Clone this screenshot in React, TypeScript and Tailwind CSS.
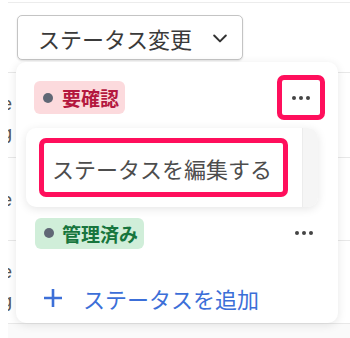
import React from "react";

const Dots = () => (
  <div className="flex items-center gap-[3px]">
    <span className="w-[4px] h-[4px] rounded-full bg-[#444]" />
    <span className="w-[4px] h-[4px] rounded-full bg-[#444]" />
    <span className="w-[4px] h-[4px] rounded-full bg-[#444]" />
  </div>
);

const BgRow = ({ lines, h }: { lines: string[]; h: string }) => (
  <div className={`border-t border-[#e8e8e8] overflow-hidden ${h}`}>
    <div className="flex flex-col pt-[17px] -ml-[6px] text-[18px] leading-[29px] text-[#555] font-['Liberation_Sans',sans-serif]">
      {lines.map((l, i) => (
        <span key={i}>{l}</span>
      ))}
    </div>
  </div>
);

export default function App() {
  return (
    <div className="relative w-[350px] h-[338px] overflow-hidden bg-white font-['Noto_Sans_CJK_JP','Noto_Sans',sans-serif]">
      <div className="pl-[8px]">
        <div className="mt-[2px] border-t border-[#ececec]" />
        <div className="h-[69px] pl-[9px] pt-[12px]">
          <button className="flex items-center h-[45px] w-[226px] pl-[20px] pr-[12px] border border-[#c4c4c4] rounded-[5px] shadow-[0_1px_2px_rgba(0,0,0,0.12)] bg-white text-[22px] leading-none text-[#3a3a3a]">
            <span className="flex-1 text-left">ステータス変更</span>
            <svg width="20" height="20" viewBox="0 0 24 24" fill="none" stroke="#333" strokeWidth="2.4" strokeLinecap="round" strokeLinejoin="round">
              <path d="M5 9l7 7 7-7" />
            </svg>
          </button>
        </div>
        <BgRow lines={["e", "g"]} h="h-[85px]" />
        <BgRow lines={["e"]} h="h-[83px] [&>div]:pt-[28px]" />
        <BgRow lines={["e", "g"]} h="h-[83px]" />
        <div className="border-t border-[#e8e8e8] h-[15px] bg-[#fafafa]" />
      </div>

      <div className="absolute left-[16px] top-[62px] w-[322px] h-[261px] bg-white rounded-[10px] shadow-[0_2px_10px_rgba(0,0,0,0.10)]">
        <div className="relative">
          {/* Row 1 */}
          <div className="h-[71px] flex items-center pl-[18px] pr-[13px]">
            <div className="flex items-center h-[33px] pl-[9px] pr-[6px] rounded-[6px] bg-[#fcdadd]">
              <span className="w-[10px] h-[10px] rounded-full bg-[#606775]" />
              <span className="ml-[9px] text-[19px] font-bold leading-none text-[#b4183f]">要確認</span>
            </div>
            <div className="ml-auto w-[48px] h-[45px] border-[5px] border-[#ff0f5c] rounded-[7px] flex items-center justify-center">
              <Dots />
            </div>
          </div>
          <div className="h-[65px]" />
          {/* Row 2 */}
          <div className="h-[70px] flex items-center pl-[19px] pr-[25px]">
            <div className="flex items-center h-[31px] pl-[9px] pr-[6px] rounded-[6px] bg-[#d0eed9]">
              <span className="w-[10px] h-[10px] rounded-full bg-[#606775]" />
              <span className="ml-[8px] text-[19px] font-bold leading-none text-[#17753d]">管理済み</span>
            </div>
            <div className="ml-auto">
              <Dots />
            </div>
          </div>
          {/* Add row */}
          <div className="h-[60px] flex items-center pl-[27px] pb-[0px] text-[#3c6fd8]">
            <svg width="20" height="20" viewBox="0 0 20 20" fill="none" stroke="#3c6fd8" strokeWidth="2.6">
              <path d="M10 1v18M1 10h18" />
            </svg>
            <span className="ml-[20px] text-[22px] leading-none">ステータスを追加</span>
          </div>

          {/* Submenu */}
          <div className="absolute left-[10px] top-[66px] w-[292px] h-[79px] bg-white rounded-[10px] shadow-[0_2px_10px_rgba(0,0,0,0.10)] flex overflow-hidden">
            <div className="flex-1 pl-[13px] pt-[10px]">
              <div className="w-[249px] h-[59px] border-[5px] border-[#ff0f5c] rounded-[7px] flex items-center pl-[8px]">
                <span className="text-[22px] leading-none text-[#4d4d4d]">ステータスを編集する</span>
              </div>
            </div>
            <div className="w-[16px] bg-[#f5f5f5] border-l border-[#ececec]" />
          </div>
        </div>
      </div>
    </div>
  );
}
